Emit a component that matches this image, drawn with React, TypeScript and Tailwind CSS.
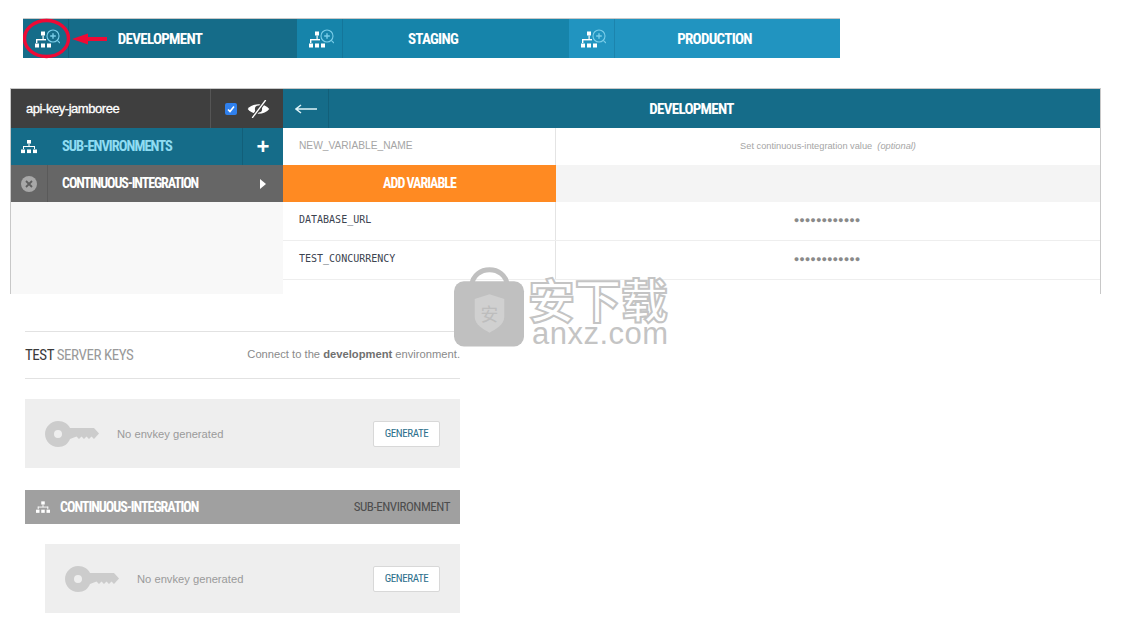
const narrow = "font-['Liberation_Sans_Narrow','Roboto_Condensed','Liberation_Sans',sans-serif]";

function TreeIcon({ className = "" }: { className?: string }) {
  return (
    <svg viewBox="0 0 16 14" className={className} fill="currentColor">
      <rect x="6" y="0" width="4" height="3.6" />
      <rect x="7.5" y="3.6" width="1" height="3" />
      <rect x="2" y="6" width="12" height="1" />
      <rect x="2" y="6" width="1" height="3" />
      <rect x="13" y="6" width="1" height="3" />
      <rect x="0" y="9.5" width="4" height="3.6" />
      <rect x="6" y="9.5" width="4" height="3.6" />
      <rect x="12" y="9.5" width="4" height="3.6" />
    </svg>
  );
}

function SearchTreeIcon() {
  return (
    <svg viewBox="0 0 28 22" className="h-[22px] w-[28px]">
      <g fill="#fff">
        <rect x="9" y="3.500" width="4" height="4" />
        <rect x="10.500" y="7.500" width="1.200" height="4" />
        <rect x="4" y="11" width="10" height="1.400" />
        <rect x="4" y="11" width="1.400" height="4" />
        <rect x="3" y="15.500" width="4" height="4" />
        <rect x="9" y="15.500" width="4" height="4" />
        <rect x="15" y="15.500" width="4" height="4" />
      </g>
      <g fill="none" stroke="#79cde8" strokeWidth="1.100">
        <circle cx="21" cy="8" r="6" />
        <path d="M25.300 12.300 L28 15" />
        <path d="M21 5.200 V10.800 M18.200 8 H23.800" strokeWidth="1.400" />
      </g>
    </svg>
  );
}

function EnvTab({ label, bg, line, nameWidth, labelPad }: { label: string; bg: string; line: string; nameWidth: string; labelPad: string }) {
  return (
    <div className={`flex h-full ${bg} ${nameWidth}`}>
      <div className={`flex w-[46px] shrink-0 items-center justify-center border-r ${line}`}>
        <SearchTreeIcon />
      </div>
      <div className={`flex-1 text-center text-[15px] leading-[41px] font-bold tracking-[-0.7px] text-white ${labelPad} ${narrow}`}>{label}</div>
    </div>
  );
}

function KeyIcon() {
  return (
    <svg viewBox="0 0 54 26" className="h-[26px] w-[54px]" fill="#cccccc">
      <path
        fillRule="evenodd"
        d="M13 0 C19 0 23 3 25 7 H49 L54 12.5 L49 18 L46.5 15.5 L44 18 L41.500 15.500 L39 18 L36.500 15.500 L34 18 L31.500 15.500 L25 18 C23 23 19 26 13 26 C6 26 0 20 0 13 C0 6 6 0 13 0 Z M13 9 A4 4 0 1 0 13 17 A4 4 0 1 0 13 9 Z"
      />
    </svg>
  );
}

function KeyBox({ className = "" }: { className?: string }) {
  return (
    <div className={`flex h-[69px] items-center bg-[#eeeeee] pr-5 pl-5 ${className}`}>
      <KeyIcon />
      <span className="ml-[18px] pt-[1px] text-[11.200px] text-[#9a9a9a]">No envkey generated</span>
      <button className={`ml-auto h-[26px] w-[67px] rounded-[2px] border border-[#d8d8d8] bg-white pt-[2px] text-[11px] tracking-[-0.4px] text-[#2b6f8c] ${narrow}`}>
        GENERATE
      </button>
    </div>
  );
}

function VarRow({ name }: { name: string }) {
  return (
    <div className="flex h-[39px] border-b border-[#eeeeee]">
      <div className="flex w-[273px] items-center border-r border-[#e4e4e4] pb-[3px] pl-4 font-['DejaVu_Sans_Mono',monospace] text-[10px] text-[#3c4450]">
        {name}
      </div>
      <div className="flex flex-1 items-center justify-center pb-[1px] pr-[2px] text-[9.200px] text-[#8a8a8a]">●●●●●●●●●●●●</div>
    </div>
  );
}

export default function App() {
  return (
    <div className="relative h-[618px] w-[1124px] overflow-hidden bg-white font-['Liberation_Sans',sans-serif]">
      <div className="pt-[18px] pl-[23px]">
        <div className="relative flex h-[40px] w-[817px] border-t border-[#c8c8c8]">
          <EnvTab label="DEVELOPMENT" bg="bg-[#156c89]" line="border-[#125f79]" nameWidth="w-[274px]" labelPad="pr-[46px]" />
          <EnvTab label="STAGING" bg="bg-[#1684aa]" line="border-[#14769a]" nameWidth="w-[272px]" labelPad="pr-[46px]" />
          <EnvTab label="PRODUCTION" bg="bg-[#2194c0]" line="border-[#1c84ad]" nameWidth="w-[271px]" labelPad="pr-[26px]" />
          {/* red annotation over the first tab */}
          <svg viewBox="0 0 90 46" className="absolute top-[-3px] left-0 h-[46px] w-[90px]" fill="none">
            <ellipse cx="23.500" cy="22.500" rx="22" ry="18" stroke="#ee0a35" strokeWidth="3.400" />
            <path d="M65 21 H84 V25 H65 V28.500 L49 23 L65 17.500 Z" fill="#ee0a35" />
          </svg>
        </div>
      </div>

      <div className="mt-[30px] ml-[10px] flex h-[206px] w-[1091px] border-t border-r border-l border-[#c8c8c8]">
        <div className="flex w-[272px] shrink-0 flex-col bg-[#f8f8f8]">
          <div className="flex h-[39px] bg-[#3f3f3f]">
            <div className="flex flex-1 items-center border-r border-[#555555] pl-[15px] text-[13px] tracking-[-0.45px] text-white [-webkit-text-stroke:0.3px_#fff]">api-key-jamboree</div>
            <div className="flex w-[72px] items-center justify-center gap-[10px]">
              <span className="flex h-[12px] w-[12px] items-center justify-center rounded-[2px] bg-[#2f80ed]">
                <svg viewBox="0 0 12 12" className="h-[12px] w-[12px]" fill="none" stroke="#fff" strokeWidth="1.600">
                  <path d="M3 6.500 L5 8.500 L9 3.500" />
                </svg>
              </span>
              <svg viewBox="0 0 24 20" className="h-[18px] w-[23px]">
                <path d="M0 10 C5 3 19 3 24 10 C19 17 5 17 0 10 Z" fill="#fff" />
                <circle cx="12" cy="10" r="4" fill="#3f3f3f" />
                <path d="M20 0 L5 20" stroke="#3f3f3f" strokeWidth="4" />
                <path d="M20 0 L5 20" stroke="#fff" strokeWidth="1.500" />
              </svg>
            </div>
          </div>
          <div className="flex h-[37px] bg-[#156c89]">
            <div className="flex w-[36px] items-center justify-center text-white">
              <TreeIcon className="h-[14px] w-[16px]" />
            </div>
            <div className={`flex-1 pl-[15px] text-[14.500px] leading-[38px] font-bold tracking-[-1px] text-[#8fdcf2] ${narrow}`}>SUB-ENVIRONMENTS</div>
            <div className="flex w-[41px] items-center justify-center border-l border-[#125f79] text-[22px] leading-none font-bold text-white">+</div>
          </div>
          <div className="flex h-[37px] bg-[#666666]">
            <div className="flex w-[37px] items-center justify-center border-r border-[#5a5a5a]">
              <span className="flex h-[16px] w-[16px] items-center justify-center rounded-full bg-[#a8a8a8]">
                <svg viewBox="0 0 8 8" className="h-[8px] w-[8px]" stroke="#5e5e5e" strokeWidth="1.800">
                  <path d="M1 1 L7 7 M7 1 L1 7" />
                </svg>
              </span>
            </div>
            <div className={`flex-1 pl-[14px] text-[14px] leading-[37px] font-bold tracking-[-1.1px] text-white ${narrow}`}>CONTINUOUS-INTEGRATION</div>
            <div className="flex w-[41px] items-center justify-center">
              <svg viewBox="0 0 6 10" className="h-[10px] w-[6px]" fill="#fff">
                <path d="M0 0 L6 5 L0 10 Z" />
              </svg>
            </div>
          </div>
        </div>

        <div className="flex flex-1 flex-col">
          <div className="flex h-[39px] bg-[#156c89]">
            <div className="flex w-[46px] items-center justify-center border-r border-[#125f79]">
              <svg viewBox="0 0 22 10" className="h-[10px] w-[22px]" fill="none" stroke="#dff3f8" strokeWidth="1.500">
                <path d="M22 5 H1 M6 1 L1 5 L6 9" />
              </svg>
            </div>
            <div className={`flex-1 pr-[46px] text-center text-[15px] leading-[40px] font-bold tracking-[-0.7px] text-white ${narrow}`}>DEVELOPMENT</div>
          </div>
          <div className="flex h-[37px]">
            <div className="flex w-[273px] items-center border-r border-[#e4e4e4] pb-[2px] pl-4 text-[10.200px] text-[#a5a5a5]">NEW_VARIABLE_NAME</div>
            <div className="flex flex-1 items-center justify-center text-[9.250px] text-[#a5a5a5]">
              Set continuous-integration value&nbsp;&nbsp;<em>(optional)</em>
            </div>
          </div>
          <div className="flex h-[37px] bg-[#f4f4f4]">
            <div className={`w-[273px] bg-[#ff8a22] text-center text-[14px] leading-[36px] font-bold tracking-[-1px] text-white ${narrow}`}>ADD VARIABLE</div>
          </div>
          <VarRow name="DATABASE_URL" />
          <VarRow name="TEST_CONCURRENCY" />
        </div>
      </div>

      <div className="mt-[37px] ml-[25px] w-[435px]">
        <div className="flex h-[48px] items-center justify-between border-y border-[#e2e2e2]">
          <div className={`text-[15px] tracking-[-0.45px] text-[#9a9a9a] ${narrow}`}>
            <span className="text-[#3a3a3a]">TEST</span> SERVER KEYS
          </div>
          <div className="pb-[1px] text-[11.200px] text-[#8a8a8a]">
            Connect to the <b className="text-[#707070]">development</b> environment.
          </div>
        </div>
        <KeyBox className="mt-[20px]" />
        <div className="mt-[22px] flex h-[34px] items-center bg-[#a0a0a0] pr-[10px] pl-[11px]">
          <TreeIcon className="h-[13px] w-[14px] text-white" />
          <span className={`ml-[10px] text-[14px] font-bold tracking-[-1px] text-white ${narrow}`}>CONTINUOUS-INTEGRATION</span>
          <span className={`ml-auto text-[13px] tracking-[-0.45px] text-[#4d4d4d] ${narrow}`}>SUB-ENVIRONMENT</span>
        </div>
        <KeyBox className="mt-[20px] ml-[20px]" />
      </div>

      {/* watermark */}
      <div className="absolute top-[267px] left-[454px] flex items-start">
        <svg viewBox="0 0 72 81" className="h-[81px] w-[71px]">
          <path d="M18 18 C20 -3 52 -3 54 18" fill="none" stroke="#c0c0c0" strokeWidth="5" />
          <rect x="0" y="14" width="71" height="66" rx="10" fill="#c0c0c0" />
          <path d="M21 32 L36 27 L51 32 V50 C51 58 42 63 36 66 C30 63 21 58 21 50 Z" fill="#d0d0d0" />
          <text x="36" y="54" textAnchor="middle" fontSize="18" fill="#bdbdbd" fontFamily="'Noto Sans CJK SC',sans-serif">安</text>
        </svg>
        <div className="ml-[3px] flex flex-col pt-[8px]">
          <div
            className="font-['Noto_Sans_CJK_SC',sans-serif] text-[47px] leading-[46px] font-bold tracking-[-0.5px] text-white"
            style={{ WebkitTextStroke: "2px #c4c4c4" }}
          >
            安下载
          </div>
          <div className="ml-[4px] text-[31px] leading-[26px] tracking-[0.5px] text-[#c4c4c4]">anxz.com</div>
        </div>
      </div>
    </div>
  );
}
